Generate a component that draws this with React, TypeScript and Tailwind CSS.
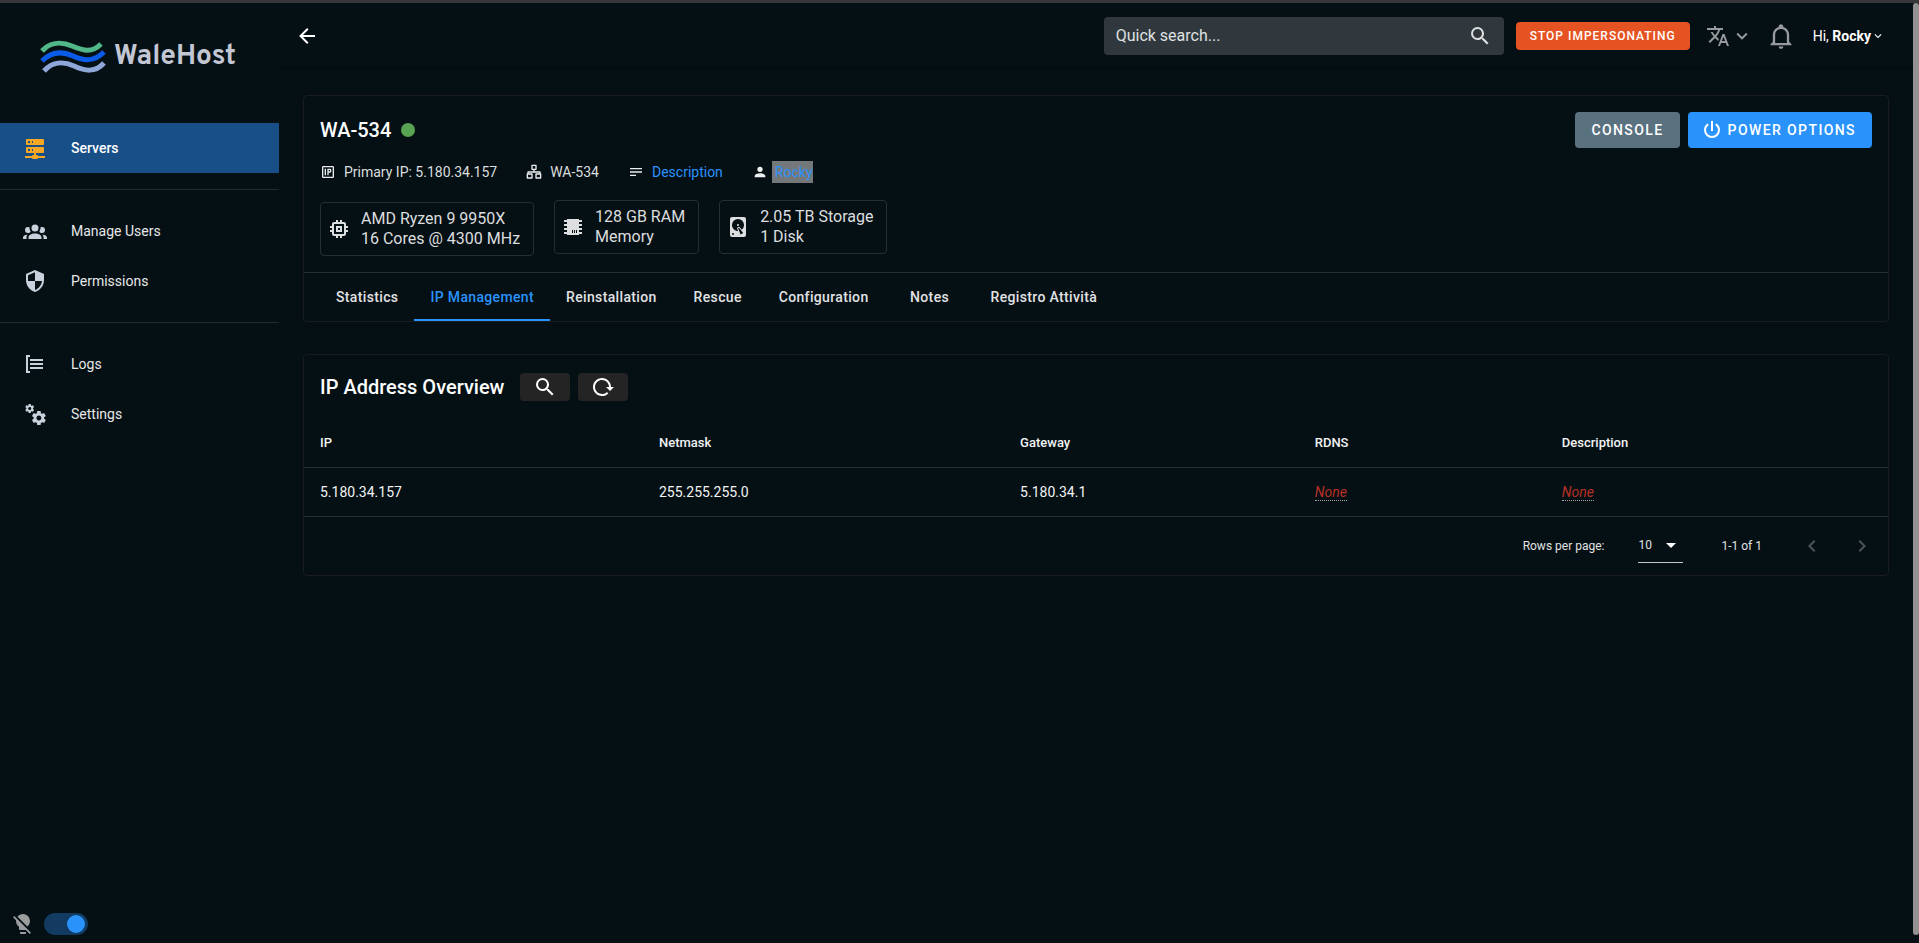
import type { ReactNode } from 'react';

const icons = {
  arrowLeft: 'M20,11V13H8L13.5,18.5L12.08,19.92L4.16,12L12.08,4.08L13.5,5.5L8,11H20Z',
  magnify:
    'M9.5,3A6.5,6.5 0 0,1 16,9.5C16,11.11 15.41,12.59 14.44,13.73L14.71,14H15.5L20.5,19L19,20.5L14,15.5V14.71L13.73,14.44C12.59,15.41 11.11,16 9.5,16A6.5,6.5 0 0,1 3,9.5A6.5,6.5 0 0,1 9.5,3M9.5,5C7,5 5,7 5,9.5C5,12 7,14 9.5,14C12,14 14,12 14,9.5C14,7 12,5 9.5,5Z',
  translate:
    'M12.87,15.07L10.33,12.56L10.36,12.53C12.1,10.59 13.34,8.36 14.07,6H17V4H10V2H8V4H1V6H12.17C11.5,7.92 10.44,9.75 9,11.35C8.07,10.32 7.3,9.19 6.69,8H4.69C5.42,9.63 6.42,11.17 7.67,12.56L2.58,17.58L4,19L9,14L12.11,17.11L12.87,15.07M18.5,10H16.5L12,22H14L15.12,19H19.87L21,22H23L18.5,10M15.88,17L17.5,12.67L19.12,17H15.88Z',
  chevronDown: 'M7.41,8.58L12,13.17L16.59,8.58L18,10L12,16L6,10L7.41,8.58Z',
  chevronLeft: 'M15.41,16.58L10.83,12L15.41,7.41L14,6L8,12L14,18L15.41,16.58Z',
  chevronRight: 'M8.59,16.58L13.17,12L8.59,7.41L10,6L16,12L10,18L8.59,16.58Z',
  menuDown: 'M7,10L12,15L17,10H7Z',
  bell: 'M10 21H14C14 22.1 13.1 23 12 23S10 22.1 10 21M21 19V20H3V19L5 17V11C5 7.9 7.03 5.17 10 4.29V4C10 2.9 10.9 2 12 2S14 2.9 14 4V4.29C16.97 5.17 19 7.9 19 11V17L21 19M17 11C17 8.24 14.76 6 12 6S7 8.24 7 11V18H17V11Z',
  server:
    'M13,19H14A1,1 0 0,1 15,20H22V22H15A1,1 0 0,1 14,23H10A1,1 0 0,1 9,22H2V20H9A1,1 0 0,1 10,19H11V17H4A1,1 0 0,1 3,16V12A1,1 0 0,1 4,11H20A1,1 0 0,1 21,12V16A1,1 0 0,1 20,17H13V19M4,3H20A1,1 0 0,1 21,4V8A1,1 0 0,1 20,9H4A1,1 0 0,1 3,8V4A1,1 0 0,1 4,3M9,7H10V5H9V7M9,15H10V13H9V15M5,5V7H7V5H5M5,13V15H7V13H5Z',
  group:
    'M12,5.5A3.5,3.5 0 0,1 15.5,9A3.5,3.5 0 0,1 12,12.5A3.5,3.5 0 0,1 8.5,9A3.5,3.5 0 0,1 12,5.5M5,8C5.56,8 6.08,8.15 6.53,8.42C6.38,9.85 6.8,11.27 7.66,12.38C7.16,13.34 6.16,14 5,14A3,3 0 0,1 2,11A3,3 0 0,1 5,8M19,8A3,3 0 0,1 22,11A3,3 0 0,1 19,14C17.84,14 16.84,13.34 16.34,12.38C17.2,11.27 17.62,9.85 17.47,8.42C17.92,8.15 18.44,8 19,8M5.5,18.25C5.5,16.18 8.41,14.5 12,14.5C15.59,14.5 18.5,16.18 18.5,18.25V20H5.5V18.25M0,20V18.5C0,17.11 1.89,15.94 4.45,15.6C3.86,16.28 3.5,17.22 3.5,18.25V20H0M24,20H20.5V18.25C20.5,17.22 20.14,16.28 19.55,15.6C22.11,15.94 24,17.11 24,18.5V20Z',
  shield:
    'M12,12H19C18.47,16.11 15.72,19.78 12,20.92V12H5V6.3L12,3.19M12,1L3,5V11C3,16.55 6.84,21.73 12,23C17.16,21.73 21,16.55 21,11V5L12,1Z',
  logs: 'M5 5V19H7V21H3V3H7V5H5M20 7H7V9H20V7M20 11H7V13H20V11M20 15H7V17H20V15Z',
  cogs: 'M15.9,18.45C17.25,18.45 18.35,17.35 18.35,16C18.35,14.65 17.25,13.55 15.9,13.55C14.54,13.55 13.45,14.65 13.45,16C13.45,17.35 14.54,18.45 15.9,18.45M21.1,16.68L22.58,17.84C22.71,17.95 22.75,18.13 22.66,18.29L21.26,20.71C21.17,20.86 21,20.92 20.83,20.86L19.09,20.16C18.73,20.44 18.33,20.67 17.91,20.85L17.64,22.7C17.62,22.87 17.47,23 17.3,23H14.5C14.32,23 14.18,22.87 14.15,22.7L13.89,20.85C13.46,20.67 13.07,20.44 12.71,20.16L10.96,20.86C10.81,20.92 10.62,20.86 10.54,20.71L9.14,18.29C9.05,18.13 9.09,17.95 9.22,17.84L10.7,16.68L10.65,16L10.7,15.31L9.22,14.16C9.09,14.05 9.05,13.86 9.14,13.71L10.54,11.29C10.62,11.13 10.81,11.07 10.96,11.13L12.71,11.84C13.07,11.56 13.46,11.32 13.89,11.15L14.15,9.29C14.18,9.13 14.32,9 14.5,9H17.3C17.47,9 17.62,9.13 17.64,9.29L17.91,11.15C18.33,11.32 18.73,11.56 19.09,11.84L20.83,11.13C21,11.07 21.17,11.13 21.26,11.29L22.66,13.71C22.75,13.86 22.71,14.05 22.58,14.16L21.1,15.31L21.15,16L21.1,16.68M6.69,8.07C7.56,8.07 8.26,7.37 8.26,6.5C8.26,5.63 7.56,4.92 6.69,4.92A1.58,1.58 0 0,0 5.11,6.5C5.11,7.37 5.82,8.07 6.69,8.07M10.03,6.94L11,7.68C11.07,7.75 11.09,7.87 11.03,7.97L10.13,9.53C10.08,9.63 9.96,9.67 9.86,9.63L8.74,9.18L8,9.62L7.81,10.81C7.79,10.92 7.7,11 7.59,11H5.79C5.67,11 5.58,10.92 5.56,10.81L5.4,9.62L4.64,9.18L3.52,9.63C3.41,9.67 3.3,9.63 3.24,9.53L2.34,7.97C2.28,7.87 2.31,7.75 2.39,7.68L3.34,6.94L3.31,6.5L3.34,6.06L2.39,5.32C2.31,5.25 2.28,5.13 2.34,5.03L3.24,3.47C3.3,3.37 3.41,3.33 3.52,3.37L4.63,3.82L5.4,3.38L5.56,2.19C5.58,2.08 5.67,2 5.79,2H7.59C7.7,2 7.79,2.08 7.81,2.19L8,3.38L8.74,3.82L9.86,3.37C9.96,3.33 10.08,3.37 10.13,3.47L11.03,5.03C11.09,5.13 11.07,5.25 11,5.32L10.03,6.06L10.06,6.5L10.03,6.94Z',
  bulbOff:
    'M12,2C9.76,2 7.78,3.05 6.5,4.68L16.31,14.5C17.94,13.21 19,11.24 19,9A7,7 0 0,0 12,2M3.28,4L2,5.27L5.04,8.3C5,8.53 5,8.76 5,9C5,11.38 6.19,13.47 8,14.74V17A1,1 0 0,0 9,18H14.73L18.73,22L20,20.72L3.28,4M9,20V21A1,1 0 0,0 10,22H14A1,1 0 0,0 15,21V20H9Z',
  power:
    'M16.56,5.44L15.11,6.89C16.84,7.94 18,9.83 18,12A6,6 0 0,1 12,18A6,6 0 0,1 6,12C6,9.83 7.16,7.94 8.88,6.88L7.44,5.44C5.36,6.88 4,9.28 4,12A8,8 0 0,0 12,20A8,8 0 0,0 20,12C20,9.28 18.64,6.88 16.56,5.44M13,3H11V13H13',
  reload:
    'M2 12C2 16.97 6.03 21 11 21C13.39 21 15.68 20.06 17.4 18.4L15.9 16.9C14.63 18.25 12.86 19 11 19C4.76 19 1.64 11.46 6.05 7.05C10.46 2.64 18 5.77 18 12H15L19 16H19.1L23 12H20C20 7.03 15.97 3 11 3C6.03 3 2 7.03 2 12Z',
  cpu: 'M17,17H7V7H17M21,11V9H19V7C19,5.89 18.1,5 17,5H15V3H13V5H11V3H9V5H7C5.89,5 5,5.89 5,7V9H3V11H5V13H3V15H5V17A2,2 0 0,0 7,19H9V21H11V19H13V21H15V19H17A2,2 0 0,0 19,17V15H21V13H19V11M13,13H11V11H13M15,9H9V15H15V9Z',
  ram: 'M6,4H18V5H21V7H18V9H21V11H18V13H21V15H18V17H21V19H18V20H6V19H3V17H6V15H3V13H6V11H3V9H6V7H3V5H6V4M11,15V18H12V15H11M13,15V18H14V15H13M15,15V18H16V15H15Z',
  disk: 'M6,2H18A2,2 0 0,1 20,4V20A2,2 0 0,1 18,22H6A2,2 0 0,1 4,20V4A2,2 0 0,1 6,2M12,4A6,6 0 0,0 6,10C6,13.31 8.69,16 12.1,16L11.22,13.77C10.95,13.29 11.11,12.68 11.59,12.4L12.45,11.9C12.93,11.63 13.54,11.79 13.82,12.27L15.74,14.69C17.12,13.59 18,11.9 18,10A6,6 0 0,0 12,4M12,9A1,1 0 0,1 13,10A1,1 0 0,1 12,11A1,1 0 0,1 11,10A1,1 0 0,1 12,9M7,18A1,1 0 0,0 6,19A1,1 0 0,0 7,20A1,1 0 0,0 8,19A1,1 0 0,0 7,18M12.09,13.27L14.58,19.58L17.17,18.08L12.95,12.77L12.09,13.27Z',
  ip: 'M5,3H19A2,2 0 0,1 21,5V19A2,2 0 0,1 19,21H5A2,2 0 0,1 3,19V5A2,2 0 0,1 5,3M5,5V19H19V5H5M7,7H9V17H7V7M11,7H15A2,2 0 0,1 17,9V11A2,2 0 0,1 15,13H13V17H11V7M13,9V11H15V9H13Z',
  network:
    'M9,1H15A1,1 0 0,1 16,2V8A1,1 0 0,1 15,9H13V11H21A1,1 0 0,1 22,12V14A1,1 0 0,1 23,15V21A1,1 0 0,1 22,22H15A1,1 0 0,1 14,21V15A1,1 0 0,1 15,14H20V13H4V14H9A1,1 0 0,1 10,15V21A1,1 0 0,1 9,22H2A1,1 0 0,1 1,21V15A1,1 0 0,1 2,14V12A1,1 0 0,1 3,11H11V9H9A1,1 0 0,1 8,8V2A1,1 0 0,1 9,1M10,3V7H14V3H10M3,16V20H8V16H3M16,16V20H21V16H16Z',
  text: 'M21,6V8H3V6H21M3,18H12V16H3V18M3,13H21V11H3V13Z',
  account:
    'M12,4A4,4 0 0,1 16,8A4,4 0 0,1 12,12A4,4 0 0,1 8,8A4,4 0 0,1 12,4M12,14C16.42,14 20,15.79 20,18V20H4V18C4,15.79 7.58,14 12,14Z',
};

type IconName = keyof typeof icons;

function Icon({ name, className = 'size-6' }: { name: IconName; className?: string }) {
  return (
    <svg viewBox="0 0 24 24" fill="currentColor" fillRule="evenodd" aria-hidden="true" className={`shrink-0 ${className}`}>
      <path d={icons[name]} />
    </svg>
  );
}

function Logo() {
  return (
    <a href="#" className="flex h-[120px] items-center pb-3 pl-10 text-[#c3c7d3]">
      <svg viewBox="0 0 66 34" className="h-[34px] w-[66px]" fill="none" strokeWidth="5">
        <path d="M2 11C9 3 20 1 32 6S52 13 61 4" stroke="#52b788" />
        <path d="M2 21C11 12 22 11 33 16S54 22 64 12" stroke="#0a5be8" />
        <path d="M4 31C12 22 23 21 34 26S55 33 64 23" stroke="#8fa6d8" />
      </svg>
      <span className="ml-2 font-['Overpass','Roboto',sans-serif] text-[28px] font-bold">WaleHost</span>
    </a>
  );
}

function NavItem({ icon, label, active = false }: { icon: IconName; label: string; active?: boolean }) {
  return (
    <a
      href="#"
      className={`flex h-[50px] items-center gap-6 pl-[23px] text-sm ${
        active ? 'bg-[#184f86] font-medium text-white' : 'text-[#e6e7e8]'
      }`}
    >
      <Icon name={icon} className={active ? 'size-6 text-[#f9a825]' : 'size-6 text-[#c9d1dc]'} />
      {label}
    </a>
  );
}

function Sidebar() {
  return (
    <aside className="flex w-[279px] shrink-0 flex-col">
      <Logo />
      <nav className="flex flex-col">
        <NavItem icon="server" label="Servers" active />
        <hr className="my-4 border-[#1f2a2f]" />
        <NavItem icon="group" label="Manage Users" />
        <NavItem icon="shield" label="Permissions" />
        <hr className="my-4 border-[#1f2a2f]" />
        <NavItem icon="logs" label="Logs" />
        <NavItem icon="cogs" label="Settings" />
      </nav>
      <label className="mt-auto flex items-center gap-[9px] pb-[7px] pl-[11px] text-[#9a9c9d]">
        <Icon name="bulbOff" />
        <input type="checkbox" role="switch" aria-label="Dark mode" defaultChecked className="peer sr-only" />
        <span className="flex h-[22px] w-11 items-center justify-end rounded-full bg-[#133a60] px-[3px]">
          <span className="size-[18px] rounded-full bg-[#2a93fb]" />
        </span>
      </label>
    </aside>
  );
}

function Header() {
  return (
    <header className="flex h-[66px] items-center border-b border-[#03090c] pr-7 pl-4">
      <button aria-label="Back" className="text-white">
        <Icon name="arrowLeft" />
      </button>
      <div className="ml-auto flex h-[38px] w-[400px] items-center rounded bg-[#30383d] pr-3 pl-3 text-[#dfe1e2]">
        <input
          aria-label="Quick search"
          placeholder="Quick search..."
          className="min-w-0 flex-1 bg-transparent text-base outline-none placeholder:text-[#dfe1e2]"
        />
        <Icon name="magnify" />
      </div>
      <button className="ml-3 h-7 rounded bg-[#e65323] px-[14px] text-xs font-medium tracking-[1px] text-white">
        STOP IMPERSONATING
      </button>
      <button aria-label="Language" className="ml-4 flex items-center gap-px text-[#989b9d]">
        <Icon name="translate" />
        <Icon name="chevronDown" className="size-[22px]" />
      </button>
      <button aria-label="Notifications" className="ml-[14px] text-[#989b9d]">
        <Icon name="bell" className="size-7" />
      </button>
      <button className="ml-[18px] flex items-center text-sm text-white">
        <span>
          Hi, <b className="font-bold">Rocky</b>
        </span>
        <Icon name="chevronDown" className="size-[14px]" />
      </button>
    </header>
  );
}

function Spec({ icon, title, sub, className = '' }: { icon: IconName; title: string; sub: string; className?: string }) {
  return (
    <div className={`flex items-center gap-[10px] rounded border border-[#252e33] py-[6px] pr-[13px] pl-[6px] text-[#dcdedf] ${className}`}>
      <Icon name={icon} />
      <div className="text-base leading-5">
        <p>{title}</p>
        <p>{sub}</p>
      </div>
    </div>
  );
}

function Meta({ icon, gap = 'gap-2', children }: { icon: IconName; gap?: string; children: ReactNode }) {
  return (
    <div className={`flex items-center ${gap}`}>
      <Icon name={icon} className="size-4 text-[#eceded]" />
      {children}
    </div>
  );
}

const tabs = ['Statistics', 'IP Management', 'Reinstallation', 'Rescue', 'Configuration', 'Notes', 'Registro Attività'];

function ServerCard() {
  return (
    <section className="rounded border border-[#1a1d1f]">
      <div className="flex items-start justify-between p-4">
        <div>
          <h1 className="flex h-9 items-center gap-[10px] text-xl font-medium text-white">
            WA-534
            <span className="size-[14px] rounded-full bg-[#5aa352]" />
          </h1>
          <div className="mt-3 flex h-6 items-center gap-[29px] text-sm text-[#dcdedf]">
            <Meta icon="ip">Primary IP: 5.180.34.157</Meta>
            <Meta icon="network">WA-534</Meta>
            <Meta icon="text">
              <a href="#" className="text-[#2a93fb]">Description</a>
            </Meta>
            <Meta icon="account" gap="gap-1">
              <a href="#" className="bg-[#75787a] py-px pl-[3px] text-[#2a93fb]">Rocky</a>
            </Meta>
          </div>
          <div className="mt-4 flex items-start gap-5">
            <Spec icon="cpu" title="AMD Ryzen 9 9950X" sub="16 Cores @ 4300 MHz" className="mt-[2px]" />
            <Spec icon="ram" title="128 GB RAM" sub="Memory" />
            <Spec icon="disk" title="2.05 TB Storage" sub="1 Disk" />
          </div>
        </div>
        <div className="flex gap-2 text-sm font-medium text-white">
          <button className="h-9 rounded bg-[#5a717f] px-4 tracking-widest">CONSOLE</button>
          <button className="flex h-9 items-center gap-1 rounded bg-[#2a93fb] pr-4 pl-3 tracking-widest">
            <Icon name="power" />
            POWER OPTIONS
          </button>
        </div>
      </div>
      <div role="tablist" className="flex h-[49px] border-t border-[#252e33] pl-4 text-sm font-medium">
        {tabs.map((tab, i) => (
          <button
            key={tab}
            role="tab"
            aria-selected={i === 1}
            className={`min-w-[90px] border-b-2 px-4 pt-[2px] tracking-wide ${
              i === 1 ? 'border-[#2a93fb] text-[#2a93fb]' : 'border-transparent text-[#e1e2e3]'
            }`}
          >
            {tab}
          </button>
        ))}
      </div>
    </section>
  );
}

function Pagination() {
  return (
    <div className="flex h-[58px] items-center justify-end pr-[14px] text-xs text-[#e1e2e3]">
      <label htmlFor="rows">Rows per page:</label>
      <div className="relative ml-[34px]">
        <select id="rows" className="h-[34px] w-[45px] appearance-none border-b border-[#c3c7ca] bg-transparent outline-none">
          <option>10</option>
        </select>
        <Icon name="menuDown" className="pointer-events-none absolute top-1 right-0 size-6 text-white" />
      </div>
      <span className="ml-[38px]">1-1 of 1</span>
      <button aria-label="Previous page" disabled className="ml-[38px] text-[#4b5357]">
        <Icon name="chevronLeft" />
      </button>
      <button aria-label="Next page" disabled className="ml-[26px] text-[#4b5357]">
        <Icon name="chevronRight" />
      </button>
    </div>
  );
}

function None() {
  return (
    <a href="#" className="border-b border-dotted border-[#a0a4a6] text-[#b93026] italic">
      None
    </a>
  );
}

function AddressCard() {
  return (
    <section className="mt-8 rounded border border-[#1a1d1f]">
      <div className="flex h-16 items-center pl-4">
        <h2 className="text-xl font-medium text-white">IP Address Overview</h2>
        <button aria-label="Search" className="ml-4 flex h-7 w-[50px] items-center justify-center rounded bg-[#242424] text-white">
          <Icon name="magnify" />
        </button>
        <button aria-label="Reload" className="ml-2 flex h-7 w-[50px] items-center justify-center rounded bg-[#242424] text-white">
          <Icon name="reload" />
        </button>
      </div>
      <table className="w-full table-fixed text-left text-[#f2f3f3]">
        <colgroup>
          <col className="w-[21.4%]" />
          <col className="w-[22.8%]" />
          <col className="w-[18.6%]" />
          <col className="w-[15.6%]" />
          <col />
        </colgroup>
        <thead>
          <tr className="h-12 border-b border-[#252e33] text-[13px]">
            {['IP', 'Netmask', 'Gateway', 'RDNS', 'Description'].map((head) => (
              <th key={head} className="px-4 font-medium">
                {head}
              </th>
            ))}
          </tr>
        </thead>
        <tbody>
          <tr className="h-[49px] border-b border-[#252e33] text-sm">
            <td className="px-4">5.180.34.157</td>
            <td className="px-4">255.255.255.0</td>
            <td className="px-4">5.180.34.1</td>
            <td className="px-4">
              <None />
            </td>
            <td className="px-4">
              <None />
            </td>
          </tr>
        </tbody>
      </table>
      <Pagination />
    </section>
  );
}

export default function App() {
  return (
    <div className="flex min-h-screen border-t-[3px] border-[#37363a] bg-[#051015] font-['Roboto',sans-serif]">
      <Sidebar />
      <div className="flex min-w-0 flex-1 flex-col">
        <Header />
        <main className="flex flex-col pt-[26px] pr-6 pl-6">
          <ServerCard />
          <AddressCard />
        </main>
      </div>
      <div className="mb-2 w-[6px] rounded-full bg-[#929292]" />
    </div>
  );
}
